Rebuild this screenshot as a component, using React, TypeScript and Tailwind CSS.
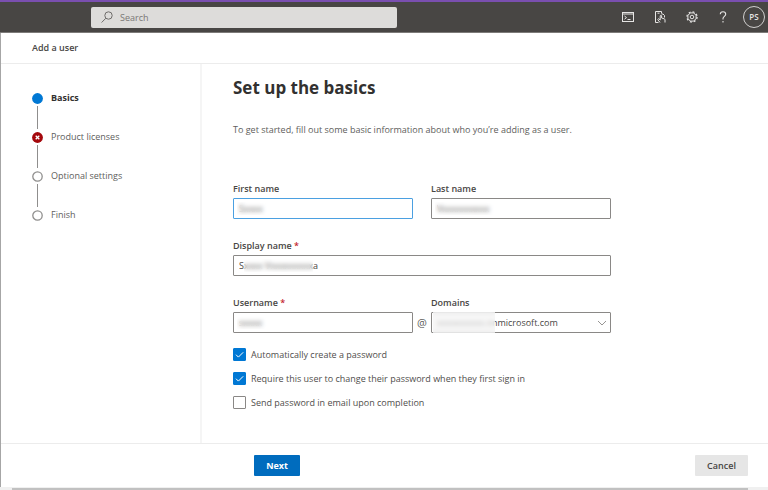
import {useState, type ReactNode} from "react"
import clsx from "clsx"

type StepState = "current" | "error" | "todo"

const STEPS: {label: string; state: StepState}[] = [
  {label: "Basics", state: "current"},
  {label: "Product licenses", state: "error"},
  {label: "Optional settings", state: "todo"},
  {label: "Finish", state: "todo"},
]

function StepMarker({state}: {state: StepState}) {
  return (
    <svg viewBox="0 0 11 11" className="size-[11px] shrink-0" aria-hidden="true">
      {state === "current" && <circle cx="5.5" cy="5.5" r="5.4" fill="#0078d4" />}
      {state === "error" && (
        <>
          <circle cx="5.5" cy="5.5" r="5.4" fill="#a4080c" />
          <path d="M3.7 3.7l3.6 3.6M7.3 3.7L3.7 7.3" stroke="#fff" strokeWidth="1.3" />
        </>
      )}
      {state === "todo" && (
        <circle cx="5.5" cy="5.5" r="4.7" fill="#fff" stroke="#8f8e8d" strokeWidth="1.3" />
      )}
    </svg>
  )
}

function Steps() {
  return (
    <ol className="flex flex-col">
      {STEPS.map((step, i) => (
        <li key={step.label} className="flex flex-col">
          <div
            className={clsx(
              "flex h-3 items-center gap-2",
              step.state === "current" ? "font-bold text-[#323130]" : "text-[#605e5c]",
            )}
            aria-current={step.state === "current" ? "step" : undefined}
          >
            <StepMarker state={step.state} />
            {step.label}
          </div>
          {i < STEPS.length - 1 && <div className="my-0.5 ml-[5px] h-[23px] w-px bg-[#8f8e8d]" />}
        </li>
      ))}
    </ol>
  )
}

// Frosted patch that hides part of a value
function Mask({className}: {className: string}) {
  return (
    <span
      className={clsx("pointer-events-none absolute backdrop-blur-[2px]", className)}
      aria-hidden="true"
    />
  )
}

function Field({
  id,
  label,
  required,
  children,
}: {
  id: string
  label: string
  required?: boolean
  children: ReactNode
}) {
  return (
    <div className="flex min-w-0 flex-col">
      <label htmlFor={id} className="h-[18px] font-semibold leading-[18px] text-[#484644]">
        {label}
        {required && <span className="text-[#c4262e]"> *</span>}
      </label>
      <div className="relative">{children}</div>
    </div>
  )
}

const inputBase =
  "block h-[21px] w-full rounded-[1px] border bg-white px-[5px] text-[9px] text-[#484644] outline-none"
const inputClass = clsx(inputBase, "border-[#8a8886]")
const activeInputClass = clsx(inputBase, "border-[#4ba0e1]")

function Check({id, label, initial}: {id: string; label: string; initial: boolean}) {
  const [checked, setChecked] = useState(initial)
  return (
    <div className="flex h-[13px] items-center">
      <span className="relative size-[13px]">
        <input
          id={id}
          type="checkbox"
          checked={checked}
          onChange={e => setChecked(e.target.checked)}
          className="block size-[13px] appearance-none rounded-[1px] border border-[#8a8886] bg-white checked:border-[#0078d4] checked:bg-[#0078d4]"
        />
        {checked && (
          <svg
            viewBox="0 0 13 13"
            className="pointer-events-none absolute inset-0 size-[13px]"
            fill="none"
            stroke="#fff"
            aria-hidden="true"
          >
            <path d="M3 6.7l2.4 2.4 4.8-4.8" />
          </svg>
        )}
      </span>
      <label htmlFor={id} className="pl-[5px] text-[#504e4c]">
        {label}
      </label>
    </div>
  )
}

function Toolbar() {
  return (
    <div className="ml-auto flex items-center text-[#e6e5e4]">
      <button type="button" aria-label="Shell" className="flex w-8 justify-center">
        <svg viewBox="0 0 12 12" className="size-3" fill="none" stroke="currentColor">
          <rect x="0.5" y="1.5" width="11" height="9" />
          <path d="M0.5 3h11" />
          <path d="M2.5 5l2 1.6-2 1.6M5.5 8.500h3" />
        </svg>
      </button>
      <button type="button" aria-label="Mobile app" className="flex w-8 justify-center">
        <svg viewBox="0 0 12 12" className="size-3" fill="none" stroke="currentColor">
          <path d="M4.500 11.500H1.500V0.500h6v2M3.500 2.200h2" />
          <path d="M6 11.500L3.700 8.500l.9-.8 1.600 1.300V5c0-1 1.400-1 1.400 0v2l2.600.8c.5.200.8.500.8 1v2.700" />
          <path d="M7.500 3h1.500l1.500 1.500v2" />
        </svg>
      </button>
      <button type="button" aria-label="Settings" className="flex w-8 justify-center">
        <svg viewBox="0 0 12 12" className="size-3" fill="none" stroke="currentColor">
          <circle cx="6" cy="6" r="4.200" />
          <circle cx="6" cy="6" r="1.800" />
          <circle cx="6" cy="6" r="5.100" strokeWidth="1.200" strokeDasharray="2 2" />
        </svg>
      </button>
      <button type="button" aria-label="Help" className="flex w-[30px] justify-center">
        <svg viewBox="0 0 8 12" className="h-3 w-2" fill="none" stroke="currentColor" strokeWidth="1.1">
          <path d="M1.300 3.200C1.300 1.600 2.400.8 4 .8s2.700.9 2.700 2.400C6.700 5.400 4 5.300 4 7.600v.9M4 10v1.400" />
        </svg>
      </button>
      <button
        type="button"
        aria-label="Account"
        className="ml-[5px] flex size-[22px] items-center justify-center rounded-full border border-[#d0cfce] text-[8px] font-semibold"
      >
        PS
      </button>
    </div>
  )
}

export default function App() {
  const [search, setSearch] = useState("")
  const [first, setFirst] = useState("Sxxxx")
  const [last, setLast] = useState("Vxxxxxxxxxx")
  const [display, setDisplay] = useState("Sxxxx Vxxxxxxxxxa")
  const [username, setUsername] = useState("sxxxx")

  return (
    <div className="flex min-h-screen flex-col bg-white font-['Open_Sans','Noto_Sans',sans-serif] text-[9px] leading-3 text-[#484644]">
      <header className="flex h-[33px] items-center border-t-2 border-b border-t-[#7a4fb0] border-b-[#7d7b79] bg-[#484644] pr-[3px]">
        <div className="relative ml-[91px] w-2/5">
          <svg
            viewBox="0 0 12 12"
            className="pointer-events-none absolute top-1 left-2.5 size-3"
            fill="none"
            stroke="#6f6d6b"
            aria-hidden="true"
          >
            <circle cx="7.500" cy="4.500" r="3.700" />
            <path d="M4.900 7.200L.6 11.500" />
          </svg>
          <input
            type="search"
            aria-label="Search"
            placeholder="Search"
            value={search}
            onChange={e => setSearch(e.target.value)}
            className="block h-[21px] w-full rounded-[2px] bg-[#dddcda] pr-2 pl-[29px] text-[9px] outline-none placeholder:text-[#797775]"
          />
        </div>
        <Toolbar />
      </header>

      <div className="flex flex-1 flex-col border-l border-[#a6a6a6]">
        <div className="flex h-[31px] items-center border-b border-[#ececec] pl-[31px] font-semibold">
          Add a user
        </div>

        <div className="flex flex-1">
          <nav aria-label="Progress" className="w-[201px] shrink-0 border-r-2 border-[#f5f5f5] pt-7 pl-[31px]">
            <Steps />
          </nav>

          <main className="min-w-0 flex-1 pr-8 pl-[31px]">
            <h1 className="pt-3 text-[17px] font-bold leading-6 text-[#323130]">Set up the basics</h1>
            <p className="mt-6 text-[#605e5c]">
              To get started, fill out some basic information about who you’re adding as a user.
            </p>

            <form className="mt-11 flex max-w-[378px] flex-col gap-[18px]">
              <div className="grid grid-cols-2 gap-[18px]">
                <Field id="first" label="First name">
                  <input
                    id="first"
                    value={first}
                    onChange={e => setFirst(e.target.value)}
                    className={activeInputClass}
                  />
                  <Mask className="inset-y-1 left-1 w-8 bg-white/20" />
                </Field>
                <Field id="last" label="Last name">
                  <input id="last" value={last} onChange={e => setLast(e.target.value)} className={inputClass} />
                  <Mask className="inset-y-1 left-1 w-16 bg-white/20" />
                </Field>
              </div>

              <Field id="display" label="Display name" required>
                <input
                  id="display"
                  value={display}
                  onChange={e => setDisplay(e.target.value)}
                  className={inputClass}
                />
                <Mask className="inset-y-1 left-[11px] w-[69px] bg-white/20" />
              </Field>

              <div className="relative grid grid-cols-2 gap-[18px]">
                <Field id="username" label="Username" required>
                  <input
                    id="username"
                    value={username}
                    onChange={e => setUsername(e.target.value)}
                    className={inputClass}
                  />
                  <Mask className="inset-y-1 left-1 w-8 bg-white/20" />
                </Field>
                <span className="absolute bottom-1 left-1/2 -translate-x-1/2 text-[11px] text-[#605e5c]">@</span>
                <Field id="domain" label="Domains">
                  <select id="domain" className={clsx(inputClass, "appearance-none")}>
                    <option>xxxxxxxxxx.onmicrosoft.com</option>
                  </select>
                  <Mask className="inset-y-0 left-0.5 w-[62px] bg-[#f3f3f3]/70" />
                  <svg
                    viewBox="0 0 10 6"
                    className="pointer-events-none absolute top-2 right-1 h-1.5 w-2.5"
                    fill="none"
                    stroke="#979593"
                    aria-hidden="true"
                  >
                    <path d="M1 1l4 4 4-4" />
                  </svg>
                </Field>
              </div>
            </form>

            <div className="mt-[15px] mb-7 flex flex-col gap-[11px]">
              <Check id="auto" label="Automatically create a password" initial />
              <Check
                id="change"
                label="Require this user to change their password when they first sign in"
                initial
              />
              <Check id="email" label="Send password in email upon completion" initial={false} />
            </div>
          </main>
        </div>

        <footer className="flex h-11 items-center justify-between border-t border-[#ececec] pr-5 pl-[253px] font-semibold">
          <button type="button" className="h-[21px] w-[46px] rounded-[1px] bg-[#006cbe] font-bold text-white">
            Next
          </button>
          <button type="button" className="h-[21px] w-[53px] rounded-[1px] bg-[#e6e6e6]">
            Cancel
          </button>
        </footer>
      </div>

      <div className="h-[3px] bg-[#f0f0f0] pt-px pr-5 pl-3">
        <div className="h-0.5 bg-[#c1c1c1]" />
      </div>
    </div>
  )
}
